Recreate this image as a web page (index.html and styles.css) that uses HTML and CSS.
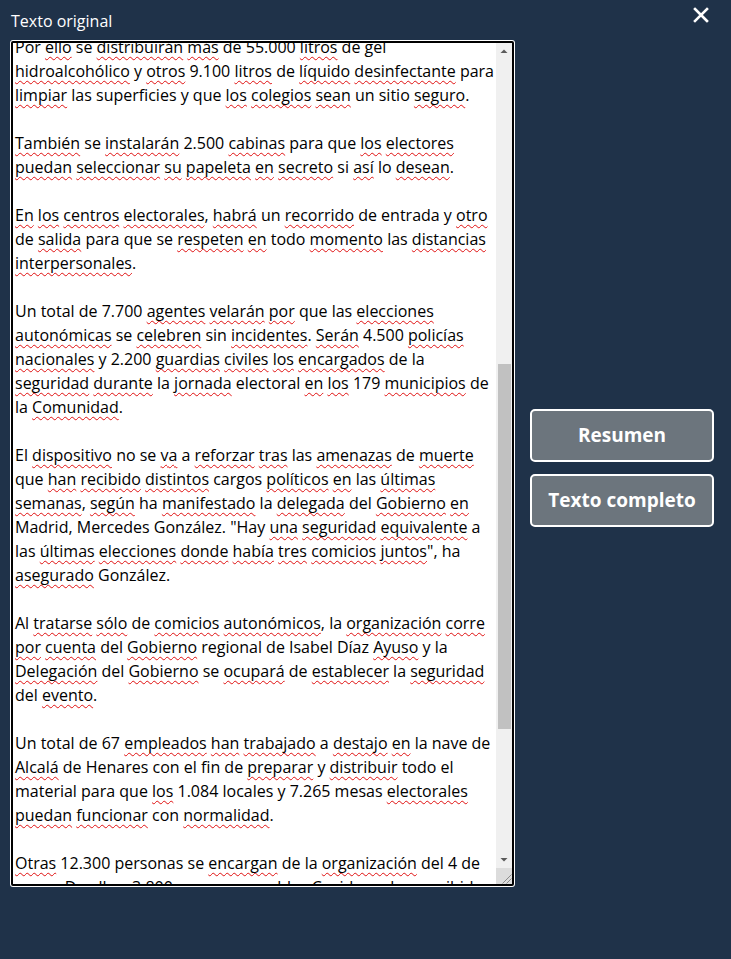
FILE: index.html
```html
<!DOCTYPE html>
<html lang="es">
<head>
<meta charset="utf-8">
<title>Texto original</title>
<link rel="stylesheet" href="styles.css">
</head>
<body>
<div class="modal">
  <header class="modal-head">
    <h1 class="modal-title">Texto original</h1>
    <button class="close" aria-label="Cerrar">
      <svg width="16" height="16" viewBox="0 0 16 16"><path d="M2 2 L14 14 M14 2 L2 14" stroke="#fff" stroke-width="2.6" stroke-linecap="square" fill="none"/></svg>
    </button>
  </header>
  <div class="modal-body">
    <div class="editor-frame">
      <div class="editor" id="editor">
        <p>La Comunidad de Madrid celebra este martes 4 de mayo unas elecciones autonómicas anticipadas que estarán marcadas por la pandemia del coronavirus. Más de 5,1 millones de madrileños están llamados a las urnas en una jornada en la que se han reforzado las medidas sanitarias para garantizar la seguridad tanto de los votantes como de los miembros de las mesas electorales.</p>
        <p>Los colegios abrirán a las 9.00 horas y cerrarán a las 20.00 horas. La Delegación del Gobierno recomienda que las personas mayores de 65 años acudan a votar entre las 10.00 y las 12.00 horas, mientras que la última hora queda reservada para las personas con Covid-19 o en cuarentena.</p>
        <p>Será obligatorio el uso de mascarilla en todo momento y se aconseja a los votantes que lleven la papeleta preparada desde casa para evitar aglomeraciones en el interior de los colegios y reducir el tiempo de espera.</p>
        <p>Los miembros de las mesas recibirán un kit de protección compuesto por mascarillas FFP2, pantallas faciales, guantes y gel hidroalcohólico. Además, todos los locales contarán con puntos de desinfección de manos a la entrada y a la salida.</p>
        <p id="start">Por <u>ello</u> se <u>distribuirán</u> <u>más</u> de 55.000 <u>litros</u> de gel <u>hidroalcohólico</u> y <u>otros</u> 9.100 <u>litros</u> de <u>líquido</u> <u>desinfectante</u> para <u>limpiar</u> las superficies y que <u>los</u> <u>colegios</u> <u>sean</u> un sitio <u>seguro</u>.</p>
        <p><u>También</u> se <u>instalarán</u> 2.500 <u>cabinas</u> para que <u>los</u> <u>electores</u> <u>puedan</u> <u>seleccionar</u> <u>su</u> <u>papeleta</u> <u>en</u> <u>secreto</u> si <u>así</u> lo <u>desean</u>.</p>
        <p><u>En</u> <u>los</u> <u>centros</u> <u>electorales</u>, <u>habrá</u> un <u>recorrido</u> de entrada y <u>otro</u> de <u>salida</u> para que se <u>respeten</u> <u>en</u> todo <u>momento</u> las <u>distancias</u> <u>interpersonales</u>.</p>
        <p>Un total de 7.700 <u>agentes</u> <u>velarán</u> <u>por</u> que las <u>elecciones</u> <u>autonómicas</u> se <u>celebren</u> sin <u>incidentes</u>. <u>Serán</u> 4.500 <u>policías</u> <u>nacionales</u> y 2.200 <u>guardias</u> <u>civiles</u> <u>los</u> <u>encargados</u> de la <u>seguridad</u> <u>durante</u> la <u>jornada</u> electoral <u>en</u> <u>los</u> 179 <u>municipios</u> de la <u>Comunidad</u>.</p>
        <p>El <u>dispositivo</u> no se <u>va</u> a <u>reforzar</u> <u>tras</u> las <u>amenazas</u> de <u>muerte</u> que <u>han</u> <u>recibido</u> <u>distintos</u> cargos <u>políticos</u> <u>en</u> las <u>últimas</u> <u>semanas</u>, <u>según</u> ha <u>manifestado</u> la <u>delegada</u> del <u>Gobierno</u> <u>en</u> Madrid, Mercedes González. "Hay <u>una</u> <u>seguridad</u> <u>equivalente</u> a las <u>últimas</u> <u>elecciones</u> <u>donde</u> <u>había</u> <u>tres</u> <u>comicios</u> <u>juntos</u>", ha <u>asegurado</u> González.</p>
        <p>Al <u>tratarse</u> <u>sólo</u> de <u>comicios</u> <u>autonómicos</u>, la <u>organización</u> <u>corre</u> <u>por</u> <u>cuenta</u> del <u>Gobierno</u> regional de Isabel Díaz <u>Ayuso</u> y la <u>Delegación</u> del <u>Gobierno</u> se <u>ocupará</u> de <u>establecer</u> la <u>seguridad</u> del <u>evento</u>.</p>
        <p>Un total de 67 <u>empleados</u> <u>han</u> <u>trabajado</u> a <u>destajo</u> <u>en</u> la nave de <u>Alcalá</u> de Henares con el fin de <u>preparar</u> y <u>distribuir</u> todo el material para que <u>los</u> 1.084 locales y 7.265 mesas <u>electorales</u> <u>puedan</u> <u>funcionar</u> con <u>normalidad</u>.</p>
        <p><u>Otras</u> 12.300 personas se <u>encargan</u> de la <u>organización</u> del 4 de <u>mayo</u>. De <u>ellos</u>, 3.800 son <u>responsables</u> Covid que <u>han</u> <u>recibido</u> <u>formación</u> <u>específica</u> para controlar <u>los</u> accesos, <u>evitar</u> <u>aglomeraciones</u> y <u>garantizar</u> que se <u>cumplen</u> las <u>medidas</u> de <u>prevención</u> <u>en</u> el interior de <u>los</u> locales.</p>
        <p>Los resultados provisionales se podrán consultar a partir de las 20.00 horas en la página web habilitada por la Comunidad de Madrid, que irá actualizando los datos.</p>
      </div>
      <div class="scrollbar" aria-hidden="true">
        <div class="sb-btn">
          <svg width="16" height="16" viewBox="0 0 16 16"><path d="M4.5 10 L8 6.5 L11.5 10 Z" fill="#5a5a5a"/></svg>
        </div>
        <div class="sb-track"><div class="sb-thumb"></div></div>
        <div class="sb-btn">
          <svg width="16" height="16" viewBox="0 0 16 16"><path d="M4.5 6 L8 9.5 L11.5 6 Z" fill="#5a5a5a"/></svg>
        </div>
        <div class="sb-corner">
          <svg width="16" height="16" viewBox="0 0 16 16"><path d="M15.5 6.5 L6.5 15.5 M15.5 10.5 L10.5 15.5" stroke="#8a8a8a" stroke-width="1" fill="none"/></svg>
        </div>
      </div>
    </div>
    <div class="actions">
      <button class="btn">Resumen</button>
      <button class="btn">Texto completo</button>
    </div>
  </div>
</div>
<script src="script.js"></script>
</body>
</html>
```
FILE: styles.css
```css
html, body {
  margin: 0;
  padding: 0;
  background: #1f3249;
  height: 100%;
}
body {
  font-family: "Open Sans", "Noto Sans", sans-serif;
  color: #fff;
}
.modal {
  padding: 0 0 0 11px;
}
.modal-head {
  display: flex;
  align-items: center;
  justify-content: space-between;
  height: 41px;
  padding-right: 22px;
}
.modal-title {
  margin: 0;
  font-size: 16px;
  font-weight: 400;
  line-height: 22px;
  padding-top: 1px;
}
.close {
  background: none;
  border: 0;
  padding: 0;
  margin-bottom: 12px;
  width: 16px;
  height: 16px;
  display: flex;
  cursor: pointer;
}
.modal-body {
  display: flex;
  align-items: center;
  gap: 16px;
}
.editor-frame {
  flex: none;
  display: flex;
  width: 499px;
  height: 841px;
  background: #fff;
  border: 2px solid #000;
  border-radius: 2px;
  box-shadow: 0 0 0 1px #fff;
}
.editor {
  flex: 1;
  min-width: 0;
  overflow: hidden;
  padding: 0 2px;
  color: #000;
  font-size: 16px;
  line-height: 24px;
}
.editor p {
  margin: 0 0 24px;
}
.editor p:last-child {
  margin-bottom: 0;
}
.editor u {
  text-decoration: underline wavy #e01010;
  text-decoration-thickness: 1px;
  text-underline-offset: 3px;
  text-decoration-skip-ink: none;
}
.scrollbar {
  flex: none;
  width: 16px;
  display: flex;
  flex-direction: column;
  background: #f0f0f0;
}
.sb-btn {
  height: 16px;
  flex: none;
  display: flex;
}
.sb-track {
  flex: 1;
  display: flex;
  flex-direction: column;
}
.sb-thumb {
  margin: 305px 1px 0 2px;
  height: 365px;
  background: #c1c1c1;
}
.sb-corner {
  height: 16px;
  flex: none;
  display: flex;
  background: #dcdcdc;
}
.actions {
  display: flex;
  flex-direction: column;
  gap: 12px;
  margin-top: 8px;
}
.btn {
  width: 184px;
  height: 53px;
  background: #6c757d;
  color: #fff;
  border: 2px solid #fff;
  border-radius: 5px;
  font-family: "Open Sans", "Noto Sans", sans-serif;
  font-weight: 700;
  font-size: 19px;
  padding: 0;
  cursor: pointer;
}
```
FILE: script.js
```js
(function () {
  var box = document.getElementById('editor');
  var start = document.getElementById('start');
  var off = start.getBoundingClientRect().top - box.getBoundingClientRect().top + box.scrollTop;
  box.scrollTop = off + 8;
})();
```
